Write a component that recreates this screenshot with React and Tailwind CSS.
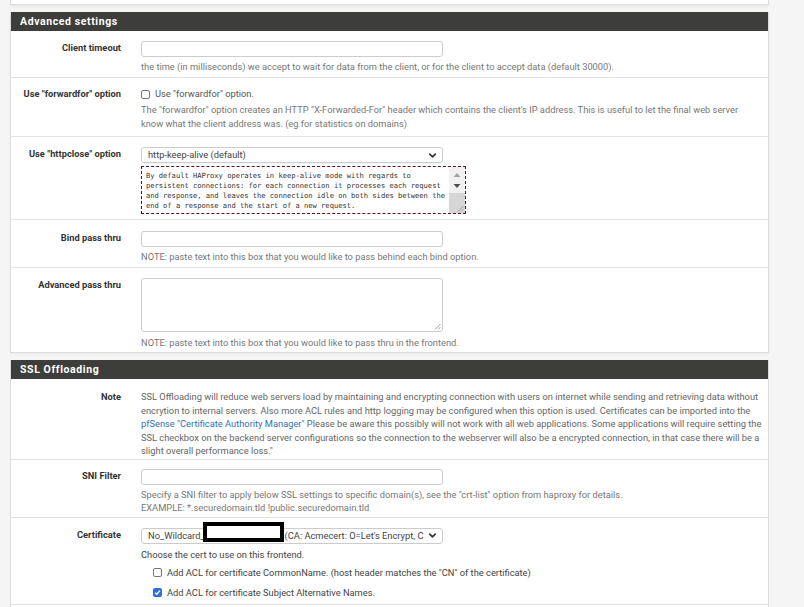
import { ChevronDown } from 'lucide-react';

const Row = ({ label, pt = 'pt-[11px]', pb = 'pb-[3px]', last = false, children }) => (
  <div className={`flex ${pt} ${pb} ${last ? '' : 'border-b border-[#e3e3e3]'}`}>
    <div className="w-[110px] shrink-0 text-right font-bold text-[#333] leading-[13px] whitespace-nowrap">{label}</div>
    <div className="ml-[20px] flex-1 min-w-0">{children}</div>
  </div>
);

const Input = () => (
  <div className="w-[302px] h-[16px] border border-[#ccc] rounded-[3px] bg-white" />
);

const Select = ({ children }) => (
  <div className="relative w-[302px] h-[16px] border border-[#ccc] rounded-[3px] bg-white flex items-center pl-[6px] pr-[4px] text-[#444]">
    <span className="flex-1 whitespace-nowrap overflow-hidden">{children}</span>
    <ChevronDown size={11} strokeWidth={3.5} className="text-[#333] shrink-0" />
  </div>
);

const Grip = () => (
  <svg width="7" height="7" viewBox="0 0 7 7" className="absolute right-[1px] bottom-[1px]">
    <line x1="6.5" y1="1" x2="1" y2="6.5" stroke="#888" strokeWidth="0.8" />
    <line x1="6.5" y1="4" x2="4" y2="6.5" stroke="#888" strokeWidth="0.8" />
  </svg>
);

const Box = ({ checked }) =>
  checked ? (
    <span className="inline-flex w-[9px] h-[9px] rounded-[2px] bg-[#2f6fd6] items-center justify-center shrink-0">
      <svg width="7" height="7" viewBox="0 0 8 8">
        <path d="M1.3 4.2 L3.2 6 L6.8 1.8" stroke="white" strokeWidth="1.5" fill="none" />
      </svg>
    </span>
  ) : (
    <span className="inline-block w-[9px] h-[9px] rounded-[2px] border border-[#767676] bg-white shrink-0" />
  );

const Help = ({ mt = 'mt-[3px]', children }) => (
  <div className={`${mt} text-[#777] leading-[14px] whitespace-nowrap`}>{children}</div>
);

const Header = ({ children }) => (
  <div className="h-[19px] bg-[#3d3d3b] text-white font-bold text-[10.5px] tracking-[0.6px] leading-[19px] px-[9px]">
    {children}
  </div>
);

export default function App() {
  return (
    <div className="w-[804px] h-[607px] overflow-hidden bg-[#f5f5f5] font-['Roboto',sans-serif] text-[9.3px]">
      <div className="ml-[10px] w-[759px]">
        {/* end of previous panel */}
        <div className="h-[5px] bg-white border-x border-b border-[#ddd] shadow-[0_2px_3px_rgba(0,0,0,0.06)]" />

        <div className="mt-[7px] bg-white border-x border-b border-[#ddd] shadow-[0_1px_2px_rgba(0,0,0,0.05)]">
          <Header>Advanced settings</Header>

          <Row label="Client timeout" pt="pt-[10px]">
            <Input />
            <Help>the time (in milliseconds) we accept to wait for data from the client, or for the client to accept data (default 30000).</Help>
          </Row>

          <Row label={'Use "forwardfor" option'} pt="pt-[9px]" pb="pb-[5px]">
            <div className="flex items-center h-[14px] text-[#555]">
              <Box />
              <span className="ml-[5px]">Use "forwardfor" option.</span>
            </div>
            <Help mt="mt-[2px]">
              The "forwardfor" option creates an HTTP "X-Forwarded-For" header which contains the client's IP address. This is useful to let the final web server
              <br />
              know what the client address was. (eg for statistics on domains)
            </Help>
          </Row>

          <Row label={'Use "httpclose" option'} pt="pt-[10px]" pb="pb-[5px]">
            <Select>http-keep-alive (default)</Select>
            <div className="relative mt-[3px] w-[325px] h-[48px] border border-dashed border-[#5a1414] bg-white">
              <div className="pl-[4px] pt-[4px] font-['DejaVu_Sans_Mono',monospace] text-[7.1px] leading-[10px] text-[#333] whitespace-nowrap">
                By default HAProxy operates in keep-alive mode with regards to
                <br />
                persistent connections: for each connection it processes each request
                <br />
                and response, and leaves the connection idle on both sides between the
                <br />
                end of a response and the start of a new request.
              </div>
              <div className="absolute right-0 top-0 bottom-0 w-[16px] bg-[#f1f1f1] flex flex-col items-center">
                <svg width="8" height="6" viewBox="0 0 8 6" className="mt-[5px]">
                  <polygon points="4,1 7.5,5 0.5,5" fill="#a3a3a3" />
                </svg>
                <svg width="8" height="6" viewBox="0 0 8 6" className="mt-[5px]">
                  <polygon points="0.5,1 7.5,1 4,5" fill="#505050" />
                </svg>
                <div className="mt-[4px] w-full flex-1 bg-[#d6d6d6]" />
              </div>
              <Grip />
            </div>
          </Row>

          <Row label="Bind pass thru" pt="pt-[11px]">
            <Input />
            <Help>NOTE: paste text into this box that you would like to pass behind each bind option.</Help>
          </Row>

          <Row label="Advanced pass thru" pt="pt-[10px]" pb="pb-[2px]" last>
            <div className="relative w-[302px] h-[54px] border border-[#ccc] rounded-[3px] bg-white">
              <Grip />
            </div>
            <Help mt="mt-[4px]">NOTE: paste text into this box that you would like to pass thru in the frontend.</Help>
          </Row>
        </div>

        <div className="mt-[7px] bg-white border-x border-b border-[#ddd]">
          <Header>SSL Offloading</Header>

          <Row label="Note" pt="pt-[11px]" pb="pb-[1px]">
            <div className="text-[#666] leading-[13.6px] whitespace-nowrap">
              SSL Offloading will reduce web servers load by maintaining and encrypting connection with users on internet while sending and retrieving data without
              <br />
              encrytion to internal servers. Also more ACL rules and http logging may be configured when this option is used. Certificates can be imported into the
              <br />
              <span className="text-[#3174b3]">pfSense "Certificate Authority Manager"</span> Please be aware this possibly will not work with all web applications. Some applications will require setting the
              <br />
              SSL checkbox on the backend server configurations so the connection to the webserver will also be a encrypted connection, in that case there will be a
              <br />
              slight overall performance loss."
            </div>
          </Row>

          <Row label="SNI Filter" pt="pt-[9px]" pb="pb-[3px]">
            <Input />
            <div className="mt-[3px] text-[#777] leading-[13px] whitespace-nowrap">
              Specify a SNI filter to apply below SSL settings to specific domain(s), see the "crt-list" option from haproxy for details.
              <br />
              EXAMPLE: *.securedomain.tld !public.securedomain.tld
            </div>
          </Row>

          <Row label="Certificate" pt="pt-[10px]" pb="pb-[4px]">
            <div className="relative">
              <Select>
                No_Wildcard_<span className="inline-block w-[80px]" />(CA: Acmecert: O=Let's Encrypt, C
              </Select>
              <div className="absolute left-[62px] top-[-6px] w-[81px] h-[20px] bg-white border-[4px] border-black" />
            </div>
            <div className="mt-[4px] text-[#444] leading-[14px]">Choose the cert to use on this frontend.</div>
            <div className="flex items-center h-[14px] mt-[4px] ml-[12px] text-[#444]">
              <Box />
              <span className="ml-[5px]">Add ACL for certificate CommonName. (host header matches the "CN" of the certificate)</span>
            </div>
            <div className="flex items-center h-[14px] mt-[6px] ml-[12px] text-[#444]">
              <Box checked />
              <span className="ml-[5px]">Add ACL for certificate Subject Alternative Names.</span>
            </div>
          </Row>
          <div className="h-[10px]" />
        </div>
      </div>
    </div>
  );
}
